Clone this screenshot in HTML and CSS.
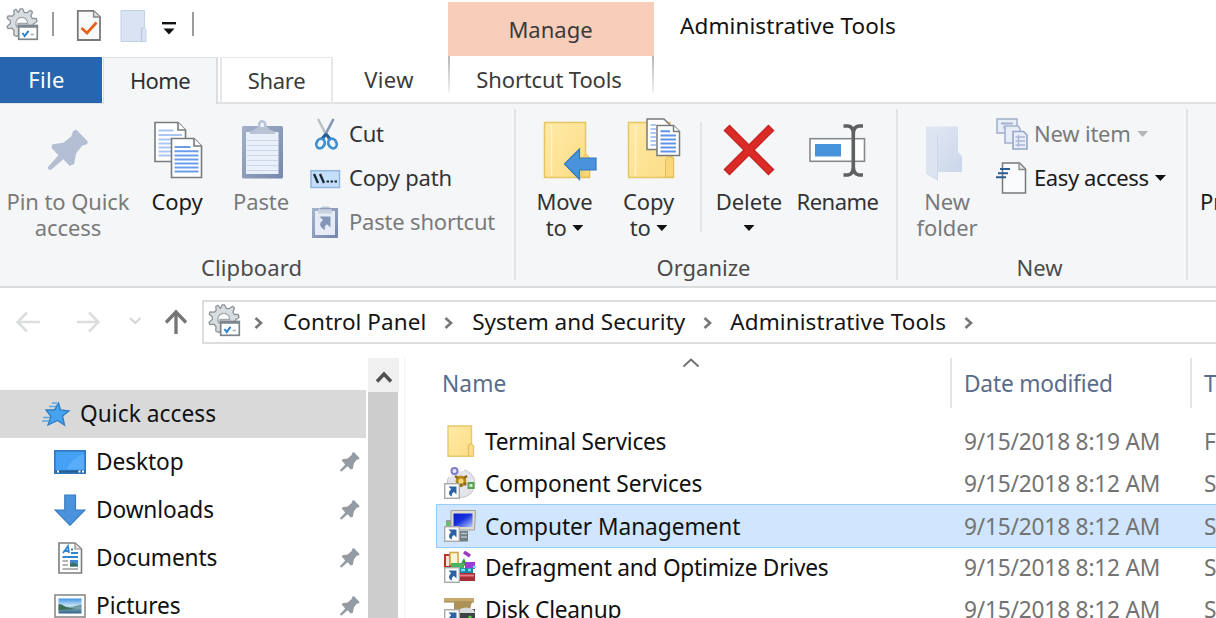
FILE: index.html
```
<!DOCTYPE html>
<html lang="en">
<head>
<meta charset="utf-8">
<title>Administrative Tools</title>
<link rel="stylesheet" href="styles.css">
</head>
<body>
<svg class="defs" width="0" height="0">
  <defs>
    <linearGradient id="folder" x1="0" y1="0" x2="1" y2="1"><stop offset="0" stop-color="#ffeaa6"/><stop offset="1" stop-color="#fbdc86"/></linearGradient>
    <linearGradient id="pale" x1="0" y1="0" x2="1" y2="1"><stop offset="0" stop-color="#e3e9f3"/><stop offset="1" stop-color="#c9d6e9"/></linearGradient>
    <linearGradient id="clip" x1="0" y1="0" x2="1" y2="1"><stop offset="0" stop-color="#a3b0c9"/><stop offset="1" stop-color="#7688ab"/></linearGradient>
    <linearGradient id="screen" x1="0" y1="0" x2="1" y2="1"><stop offset="0" stop-color="#0a1cc8"/><stop offset=".45" stop-color="#1730dd"/><stop offset="1" stop-color="#b9ccff"/></linearGradient>
    <linearGradient id="sky" x1="0" y1="0" x2="0" y2="1"><stop offset="0" stop-color="#3f92e6"/><stop offset=".5" stop-color="#cfe9f7"/><stop offset=".6" stop-color="#7fa8b5"/><stop offset="1" stop-color="#2f6488"/></linearGradient>
    <symbol id="pin" viewBox="0 0 42 42"><path d="M28 0.5Q29 0 30 1L40.500 12Q41 14 40 15L35 16.500L29 24L27 35L22.500 37L16 30L4 40.500Q1 42 0 38.500L11 26L4 18.500L5 15L16 13.500L24 7L26 1.500Z"/></symbol>
    <symbol id="admin" viewBox="0 0 33 33">
      <path fill="#d8dde1" stroke="#8d9397" stroke-width="1.300" stroke-linejoin="round" d="M12.500 4.500L9.800 1.200L7.800 2.500L8.200 6.300L6.300 8.200L2 8L1.200 10.200L4.300 12.700L4.300 15.500L1 18.500L2 20.700L6 20.200L8 22.500L7.800 27L10.500 28.500L14 26L28 20L27.200 16L31 13.500L30.300 10.500L26.300 10.500L24.800 8L26.500 4.300L24.500 2.300L21 4.700L18.300 4.500L16.600 .8L14.200 .8Z"/>
      <path fill="#fff" stroke="#a3a8ab" stroke-width="1.300" d="M11 19A6 6 0 1 1 21.800 15.500H12V19Z"/>
      <rect x="12.700" y="17.500" width="18.600" height="13.800" fill="#fff" stroke="#7c868c" stroke-width="1.700"/>
      <path d="M12.500 18.500H31.500" stroke="#7c868c" stroke-width="2.500"/>
      <path d="M16.500 25L18.700 28L22.500 22.800" fill="none" stroke="#2b80d8" stroke-width="2"/>
      <path d="M24.500 26.500H28" stroke="#a9b0b5" stroke-width="1.500"/>
    </symbol>
    <symbol id="link" viewBox="0 0 16 16"><rect x=".7" y=".7" width="14.600" height="14.600" fill="#fff" stroke="#a9a9a9" stroke-width="1.400"/><path fill="#2b62a5" d="M4.500 3.500H12.500V11.500L10 9C8 10 7.500 11.500 8 13.500C4.500 12.500 4 8.500 7.200 6.200Z"/></symbol>
  </defs>
</svg>

<header class="top">
  <div class="left">
    <div class="qat">
      <svg class="ic33"><use href="#admin"/></svg>
      <span class="bar b1"></span>
      <svg class="q-check" width="26" height="34" viewBox="0 0 26 34"><path d="M1.800 1.800H17.500L24 8V31H1.800Z" fill="#f8f9fa" stroke="#797979" stroke-width="1.800"/><path d="M17.500 2V8H24" fill="#d9dcdf" stroke="#888" stroke-width="1.300"/><path d="M5.500 19L11 24L20.500 13.500" fill="none" stroke="#e4641e" stroke-width="2.800"/></svg>
      <svg class="q-folder" width="27" height="34" viewBox="0 0 27 34"><path d="M1 1.500H24.500V19L26 20.500V32.500H1Z" fill="#d9e3f3" stroke="#c3d1e6"/><path d="M21.500 32V20L23.500 18.500" fill="none" stroke="#b9c9e1" stroke-width="1.300"/></svg>
      <svg class="q-drop" width="14" height="14" viewBox="0 0 14 14"><path d="M0 1.200H14" stroke="#111" stroke-width="2.400"/><path d="M1.500 6.500H12.500L7 12.500Z" fill="#111"/></svg>
      <span class="bar b2"></span>
    </div>
    <nav class="tabs">
      <span class="tab file">File</span><span class="tab home">Home</span><span class="tab share">Share</span><span class="tab view">View</span>
    </nav>
  </div>
  <div class="ctx"><div class="ctx-name">Manage</div><div class="ctx-tab"><span>Shortcut Tools</span></div></div>
  <div class="title">Administrative Tools</div>
</header>

<section class="ribbon">
  <div class="group g-clip">
    <div class="body">
      <div class="big off" style="width:136px">
        <svg width="136" height="74" viewBox="0 114 136 74"><use href="#pin" x="47.500" y="129.500" width="41.500" height="41.500" fill="#b4bfd4"/></svg>
        <span>Pin to Quick<br>access</span>
      </div>
      <div class="big strong" style="width:82px">
        <svg width="82" height="74" viewBox="136 114 82 74"><g fill="#fff" stroke="#777b7d" stroke-width="1.600"><path d="M155 122.500H178L185.500 130V161.500H155Z"/><path d="M178 122.500V130H185.500"/></g>
          <path d="M158.500 130.500H173.500M158.500 135H182M158.500 139.500H182M158.500 143.500H172M158.500 147.500H172M158.500 151.500H172M158.500 155.500H172" stroke="#a9c7f3" stroke-width="1.800"/>
          <g fill="#fff" stroke="#777b7d" stroke-width="1.600"><path d="M171.500 138.500H194L201.500 146V177.500H171.500Z"/><path d="M194 138.500V146H201.500"/></g>
          <path d="M174.500 147H190.500M174.500 151.200H198.500M174.500 155.400H198.500M174.500 159.600H198.500M174.500 163.500H198.500M174.500 167.500H198.500M174.500 171.500H198.500" stroke="#6c9dea" stroke-width="2"/></svg>
        <span>Copy</span>
      </div>
      <div class="big off" style="width:86px">
        <svg width="86" height="74" viewBox="218 114 86 74"><rect x="242" y="126" width="41" height="52.500" rx="1.500" fill="url(#clip)"/><rect x="246" y="132" width="32.500" height="42" fill="#eaf0f9"/>
          <path d="M247 140.500H278M247 145.500H278M247 150.500H278M247 155.500H278M247 160.500H278M247 165.500H278M247 170.500H278" stroke="#ccd6e8" stroke-width="1.200"/>
          <path d="M250 134V131.500Q256 130 258 126V123.500Q259 120 262 120T266.500 123.500V126Q268 130 275 131.500V134Z" fill="#b8c3d6"/><path d="M260.500 127V124.500Q260.500 122.500 262.300 122.500T264 124.500V127Z" fill="#eef1f6"/></svg>
        <span>Paste</span>
      </div>
      <div class="smalls">
        <div class="small"><svg width="39" height="44" viewBox="310 112 39 44"><path d="M318 119L329 140" stroke="#b9c1c6" stroke-width="2.600"/><path d="M333.500 119L322.500 140" stroke="#8295b2" stroke-width="2.600"/><path d="M326 134L321 140M326 134L331 140" stroke="#235f96" stroke-width="3"/><ellipse cx="320.500" cy="143.500" rx="4" ry="5" transform="rotate(25 320.500 143.500)" fill="#f4f8fc" stroke="#3e8fd0" stroke-width="2.700"/><ellipse cx="332.500" cy="143.500" rx="4" ry="5" transform="rotate(-25 332.500 143.500)" fill="#f4f8fc" stroke="#3e8fd0" stroke-width="2.700"/></svg><span>Cut</span></div>
        <div class="small"><svg width="39" height="44" viewBox="310 156 39 44"><rect x="311" y="170.700" width="28.500" height="16.800" fill="#c3dffc" stroke="#94b5de" stroke-width="1.500"/><path d="M314 174L318 183M320 174L324 183" stroke="#1c2630" stroke-width="2.300"/><path d="M326.500 181.500H329M330.500 181.500H333M334.500 181.500H337" stroke="#1c2630" stroke-width="2.200"/></svg><span>Copy path</span></div>
        <div class="small off"><svg width="39" height="44" viewBox="310 200 39 44"><rect x="313.500" y="209.500" width="23" height="27" fill="#e6ecf6" stroke="url(#clip)" stroke-width="3"/><path d="M318 213.500V210Q319 208 321 208H322V206.500H329V208H330Q332 209 332 211V213.500Z" fill="#c8d1e0"/><path d="M320 208.500H331" stroke="#8d9cb9" stroke-width="1.500"/><path d="M319.500 216.500H330.500V227.500L327 224.300Q324 226 325 230Q319 227 320.500 222.500L323 220Z" fill="#8496b6"/></svg><span>Paste shortcut</span></div>
      </div>
    </div>
    <div class="caption">Clipboard</div>
  </div>

  <div class="group g-org">
    <div class="body">
      <div class="big" style="width:83px">
        <svg width="83" height="74" viewBox="523 114 83 74"><path d="M544.500 122.500H585.500V154L589.500 158.500V177.500H544.500Z" fill="url(#folder)" stroke="#e6c662" stroke-width="1.500"/><path d="M551.500 125V176" stroke="#fff3c6" stroke-width="1.500"/><path d="M582 177V158L586 154L589.500 158V177Z" fill="#f9d677" stroke="#e6c05a"/><path d="M564.500 164L579.500 149V158H596V170H579.500V179.500Z" fill="#4a93dc" stroke="#3478bd" stroke-width="1.200"/></svg>
        <span>Move<br>to <i class="dd"></i></span>
      </div>
      <div class="big" style="width:85px">
        <svg width="85" height="74" viewBox="606 114 85 74"><path d="M628.500 122.500H670V154L673.500 158.500V177.500H628.500Z" fill="url(#folder)" stroke="#e6c662" stroke-width="1.500"/><path d="M635.500 125V176" stroke="#fff3c6" stroke-width="1.500"/><path d="M665.500 177V159L669.500 156L673.500 159V177Z" fill="#f9d677" stroke="#e6c05a"/>
          <g fill="#fff" stroke="#777b7d" stroke-width="1.500"><path d="M647 119H664L669.500 124.500V149.500H647Z"/></g><path d="M650.500 125H656M650.500 129H656M650.500 133H656M650.500 137H656M650.500 141H656M650.500 145H656" stroke="#94b9f0" stroke-width="1.700"/>
          <g fill="#fff" stroke="#777b7d" stroke-width="1.500"><path d="M657 125.500H673.500L679.500 131.500V155.500H657Z"/><path d="M673.500 125.500V131.500H679.500"/></g><path d="M660.500 131.300H670M660.500 135.500H676M660.500 139.500H676M660.500 143.500H676M660.500 147.500H676M660.500 151.500H676" stroke="#5f93e6" stroke-width="1.900"/></svg>
        <span>Copy<br>to <i class="dd"></i></span>
      </div>
      <div class="rule"></div>
      <div class="big" style="width:82px">
        <svg width="82" height="74" viewBox="709 114 82 74"><path d="M727.500 127.500L772.500 172.500M772.500 127.500L727.500 172.500" stroke="#bd2222" stroke-width="8.500"/><path d="M728.300 128.300L771.700 171.700M771.700 128.300L728.300 171.700" stroke="#da2b27" stroke-width="6.300"/></svg>
        <span>Delete<br><i class="dd"></i></span>
      </div>
      <div class="big rename" style="width:95px">
        <svg width="95" height="74" viewBox="791 114 95 74"><rect x="811" y="138.700" width="54.500" height="22.600" fill="#fff" stroke="#858a8d" stroke-width="1.600"/><rect x="816" y="144" width="26" height="12.500" fill="#4794dc"/><path d="M844.500 126H849Q854 126.500 854.300 133V167Q854 174.500 849 175H844.500M864 126H860Q854.800 126.500 854.300 133M864 175H860Q854.800 174.500 854.300 167" fill="none" stroke="#5e6163" stroke-width="3.600"/></svg>
        <span>Rename</span>
      </div>
    </div>
    <div class="caption">Organize</div>
  </div>

  <div class="group g-new">
    <div class="body">
      <div class="big off" style="width:78px">
        <svg width="78" height="74" viewBox="908 114 78 74"><path d="M926 126.500H958V152L962 156V172H936Z" fill="url(#pale)"/><path d="M926 126.500L937.500 134V180L926 173Z" fill="#dce4f1"/><path d="M937.500 134V180M926 173L937.500 180" stroke="#cdd8e8" fill="none"/></svg>
        <span>New<br>folder</span>
      </div>
      <div class="smalls">
        <div class="small off"><svg width="38" height="44" viewBox="996 112 38 44"><g fill="#e8eef8" stroke="#a4b2cc" stroke-width="1.600"><rect x="997" y="119" width="20" height="14"/><path d="M1001 123.500H1013M1003 127.500H1010" stroke-width="2"/><path d="M1005 126H1018L1020 128.500V143H1005Z"/><path d="M1013 131.500H1023.500L1027 135V149H1013Z" stroke="#94a6c7"/></g><path d="M1015.500 137H1025M1015.500 141H1025M1015.500 145H1025M1018.500 135V147" stroke="#a9b7d2" stroke-width="1.300"/></svg><span>New item <i class="dd"></i></span></div>
        <div class="small strong easy"><svg width="38" height="44" viewBox="996 156 38 44"><path d="M1002.500 163H1019.500L1025.500 169V193H1002.500Z" fill="#fafbfc" stroke="#797979" stroke-width="1.500"/><path d="M1019 163.500V169.500H1025" fill="#e2e4e6" stroke="#8a8a8a" stroke-width="1.300"/><path d="M1000 169H1010M998 173.200H1008M996 177.300H1006" stroke="#2a5c96" stroke-width="1.900"/></svg><span>Easy access <i class="dd"></i></span></div>
      </div>
    </div>
    <div class="caption">New</div>
  </div>
  <div class="group g-open">
    <div class="body"><div class="big strong"><svg width="100" height="74"></svg><span>Properties</span></div></div>
  </div>
</section>

<section class="navbar">
  <svg width="202" height="56" viewBox="0 288 202 56" fill="none"><path d="M40 322H18M27 312.500L17.500 322L27 331.500" stroke="#dcdddd" stroke-width="2.500"/><path d="M77 322H98M89 312.500L98.500 322L89 331.500" stroke="#dcdddd" stroke-width="2.500"/><path d="M130 318L135.300 323L140.500 318" stroke="#d5d5d5" stroke-width="2"/><path d="M176 334V313M166 322.500L176 312L186 322.500" stroke="#757575" stroke-width="3.300"/></svg>
  <div class="address">
    <svg class="ic33"><use href="#admin"/></svg>
    <svg class="sep s1" viewBox="0 0 9 12"><path d="M1.500 1L7 6L1.500 11"/></svg><span>Control Panel</span>
    <svg class="sep s2" viewBox="0 0 9 12"><path d="M1.500 1L7 6L1.500 11"/></svg><span class="sys">System and Security</span>
    <svg class="sep s3" viewBox="0 0 9 12"><path d="M1.500 1L7 6L1.500 11"/></svg><span class="adm">Administrative Tools</span>
    <svg class="sep s4" viewBox="0 0 9 12"><path d="M1.500 1L7 6L1.500 11"/></svg>
  </div>
</section>

<main class="main">
  <aside class="tree">
    <div class="node root"><svg width="32" height="32" viewBox="0 0 32 32"><path d="M18.500 5L20.500 12L29 13L22.500 18L24.500 27L17.500 22.500L8 27L11 18.500L6 12H14.500Z" fill="#45a3ef" stroke="#2d7cc4" stroke-width="1.300"/><path d="M12 5H17M9 8.500H16M3 19.500H10M2 23H9" stroke="#5ca7e3" stroke-width="1.300"/></svg><span>Quick access</span></div>
    <div class="node"><svg width="32" height="32" viewBox="0 0 32 32"><rect x=".8" y="4.800" width="30.400" height="22.400" fill="#45a1f5" stroke="#2a72b8" stroke-width="1.500"/><path d="M13 23Q17 12 30 8V23Z" fill="#58acf8"/><path d="M1.500 25.500H30.500" stroke="#225d97" stroke-width="2.400"/><path d="M3 25.500H5M24.500 25.500H26.500M28 25.500H30" stroke="#fff" stroke-width="1.800"/></svg><span>Desktop</span><svg class="pin"><use href="#pin"/></svg></div>
    <div class="node"><svg width="32" height="32" viewBox="0 0 32 32"><path d="M10.800 1H21.500V16H31L16 31.300L1 16H10.800Z" fill="#4b92dd" stroke="#397bc0" stroke-width="1.200"/></svg><span>Downloads</span><svg class="pin"><use href="#pin"/></svg></div>
    <div class="node"><svg width="32" height="32" viewBox="0 0 32 32"><path d="M5 1H21L27.500 7V31H5Z" fill="#fff" stroke="#7d7d7d" stroke-width="1.600"/><path d="M21 1.500V7H27" fill="#e5e5e5" stroke="#888" stroke-width="1.200"/><path d="M9 11L14 4L15 11M10.500 9H15" fill="none" stroke="#2f86d0" stroke-width="1.800"/><path d="M17 7.500H19M17 11H24M8.500 15H24" stroke="#2f86d0" stroke-width="2"/><path d="M8.500 19H14M8.500 23H14M8.500 27H24" stroke="#9a9a9a" stroke-width="1.500"/><rect x="16" y="18" width="8" height="6.500" fill="#3e88cf"/><path d="M16 24.500V22L19 20.500L24 23V24.500Z" fill="#38705e"/></svg><span>Documents</span><svg class="pin"><use href="#pin"/></svg></div>
    <div class="node"><svg width="32" height="32" viewBox="0 0 32 32"><rect x="1" y="5" width="30" height="22" fill="#fff" stroke="#8b8b8b" stroke-width="1.600"/><rect x="4.500" y="8.500" width="23" height="15" fill="url(#sky)"/><path d="M4.500 14Q8 14 12 17L21 19L4.500 20Z" fill="#3b6e55"/><path d="M19 16.500L27.500 14.500V17.500L20 17.500Z" fill="#6c9a9b"/></svg><span>Pictures</span><svg class="pin"><use href="#pin"/></svg></div>
  </aside>
  <div class="scroll"><div class="up"><svg width="16" height="12" viewBox="0 0 16 12"><path d="M1 10.500L8 3L15 10.500" fill="none" stroke="#505050" stroke-width="3.400"/></svg></div><div class="thumb"></div></div>
  <section class="list">
    <div class="cols"><span class="c-name">Name<svg width="18" height="10" viewBox="0 0 18 10"><path d="M1.500 8.500L9 1.500L16.500 8.500" fill="none" stroke="#6e6e6e" stroke-width="1.800"/></svg></span><span class="c-date">Date modified</span><span class="c-type">Type</span></div>
    <div class="row"><svg width="32" height="32" viewBox="0 0 32 32"><path d="M4 1H27.500V19L29.500 21V31.200H4Z" fill="url(#folder)" stroke="#e8c867" stroke-width="1.400"/><path d="M24.500 31V20.500L27 18.500" fill="none" stroke="#e4c059" stroke-width="1.300"/></svg><span class="name tight">Terminal Services</span><span class="date">9/15/2018 8:19 AM</span><span class="type">File folder</span></div>
    <div class="row"><svg width="32" height="32" viewBox="0 0 32 32"><circle cx="17" cy="16.500" r="14" fill="#e3e5ea" stroke="#c3c6cd"/><path d="M5 10Q10 2 20 3" stroke="#fff" stroke-width="2" fill="none"/><circle cx="10.500" cy="4" r="3" fill="#e9eaff" stroke="#7e7cc4" stroke-width="2"/><circle cx="17" cy="14" r="4" fill="#f3d678" stroke="#b58a16" stroke-width="2.800"/><path d="M11 9L14 11M23 9L20 11M11 18L14 16.500M17 20V17M22 18L20 16" stroke="#8a6a13" stroke-width="2.600"/><rect x="24.500" y="16" width="5" height="5" fill="#d8edd3" stroke="#58a351" stroke-width="2"/><use href="#link" x="0" y="16" width="16" height="16"/></svg><span class="name">Component Services</span><span class="date">9/15/2018 8:12 AM</span><span class="type">Shortcut</span></div>
    <div class="row sel"><svg width="32" height="32" viewBox="0 0 32 32"><path d="M2 10H8V20H2Z" fill="#929ca0"/><circle cx="4" cy="14" r="1.800" fill="#54cf45"/><path d="M7 .5H31.500L30.500 20H7Z" fill="#dedbd3" stroke="#a19f98"/><path d="M9.500 3.500H28.500V17H9.500Z" fill="url(#screen)"/><path d="M16 21H24V31.500H16Z" fill="#717e84"/><path d="M17 23.500H23M17 27H23" stroke="#b8c4ca" stroke-width="1.400"/><use href="#link" x="0" y="16" width="16" height="16"/></svg><span class="name">Computer Management</span><span class="date">9/15/2018 8:12 AM</span><span class="type">Shortcut</span></div>
    <div class="row"><svg width="32" height="32" viewBox="0 0 32 32"><path d="M1 4H6V16H1Z" fill="#f8e4df" stroke="#bc3028" stroke-width="2"/><rect x="6" y="1.500" width="8" height="12" fill="#fff7cf" stroke="#cfa94a" stroke-width="1.600"/><path d="M20 1L26 5" stroke="#9b3bc4" stroke-width="3.500"/><path d="M15 16L20 7L23 14Z" fill="#3c9a50"/><path d="M7 12H20V17H7Z" fill="#4ab45e"/><rect x="21" y="11" width="10" height="7" fill="#9a3dd3"/><path d="M15 17H29V22H15Z" fill="#1e86a5"/><path d="M17 19H21M24 19H27M29 16H32" stroke="#6ee1ff" stroke-width="2.500"/><path d="M15 22H31V30H15Z" fill="#a82b38"/><path d="M16 24.500H30" stroke="#e77b80" stroke-width="2"/><use href="#link" x="0" y="16" width="16" height="16"/></svg><span class="name tight">Defragment and Optimize Drives</span><span class="date">9/15/2018 8:12 AM</span><span class="type">Shortcut</span></div>
    <div class="row"><svg width="32" height="32" viewBox="0 0 32 32"><path d="M0 5H30V9H0Z" fill="#c6a96d"/><path d="M0 9H30" stroke="#9d8148"/><path d="M10 9H28L26 16H10Z" fill="#ac9258"/><path d="M16 16H31V32H14Z" fill="#3e4345"/><path d="M14 17Q22 12 30 17L31 20H14Z" fill="#dadddd"/><circle cx="26" cy="24" r="1.600" fill="#45dd37"/><use href="#link" x="0" y="16" width="16" height="16"/></svg><span class="name tight">Disk Cleanup</span><span class="date">9/15/2018 8:12 AM</span><span class="type">Shortcut</span></div>
  </section>
</main>
</body>
</html>
```
FILE: styles.css
```
* { box-sizing: border-box; }
body {
  margin: 0;
  width: 1216px;
  height: 618px;
  overflow: hidden;
  background: #fff;
  color: #111;
  font: 22px/26px "Noto Sans", "Open Sans", sans-serif;
}
svg { display: block; flex: none; }
.defs { position: absolute; }
.ic33 { width: 33px; height: 33px; }

/* title bar and tabs */
.top { display: flex; height: 104px; border-bottom: 2px solid #e0e2e4; }
.left { width: 448px; }
.qat { display: flex; align-items: flex-start; height: 57px; padding: 8px 0 0 6px; }
.bar { width: 2px; height: 24px; margin-top: 4px; background: #9b9b9b; }
.b1 { margin-left: 13px; }
.q-check { margin: 1px 0 0 22px; }
.q-folder { margin: 1px 0 0 18px; }
.q-drop { margin: 14px 0 0 15px; }
.b2 { margin-left: 16px; }
.tabs { display: flex; height: 47px; color: #3b3b3b; }
.tab { height: 46px; line-height: 45px; text-align: center; }
.file { width: 102px; padding-right: 9px; background: #2765af; color: #fff; letter-spacing: .3px; }
.home { width: 115px; height: 47px; margin-left: 1px; background: #f5f6f8; border: 2px solid #dcddde; border-width: 1px 2px 0 1px; letter-spacing: -.6px; line-height: 44px; color: #2f2f2f; }
.share { width: 113px; margin-left: 2px; border: 1px solid #e6e8ea; border-width: 1px 2px 0; letter-spacing: -.3px; line-height: 44px; }
.view { width: 112px; letter-spacing: .4px; }
.ctx { width: 206px; padding-top: 2px; text-align: center; color: #3b3b3b; }
.ctx-name { height: 54px; line-height: 55px; padding-right: 1px; background: #f8cdb9; }
.ctx-tab { height: 37px; line-height: 46px; border: 2px solid; border-width: 0 2px; border-image: linear-gradient(#b5b5b5, #f4f4f4) 1; letter-spacing: -.15px; padding-right: 4px; }
.title { padding: 13px 0 0 26px; font-size: 22.500px; letter-spacing: .1px; line-height: 25px; color: #111; }

/* ribbon */
.ribbon { display: flex; height: 184px; background: #f5f6f8; border-bottom: 2px solid #dadcde; color: #333; }
.group { position: relative; flex: none; padding-top: 10px; }
.group::after { content: ""; position: absolute; right: 0; top: 5px; width: 2px; height: 171px; background: #e1e3e5; }
.g-clip { width: 516px; }
.g-org { width: 382px; padding-left: 7px; }
.g-new { width: 290px; padding-left: 10px; }
.g-open { width: 28px; overflow: hidden; padding-left: 12px; }
.g-open::after { display: none; }
.body { display: flex; height: 140px; }
.big { text-align: center; white-space: nowrap; }
.big > span { display: block; letter-spacing: -.1px; }
.rename > span { letter-spacing: -.5px; }
.strong { color: #1b1b1b; }
.off { color: #7a7a7a; }
.g-open .big { text-align: left; }
.smalls { margin-top: -2px; }
.g-clip .smalls { padding-left: 6px; }
.g-new .smalls { padding-left: 10px; }
.small { display: flex; height: 44px; align-items: center; white-space: nowrap; letter-spacing: -.2px; }
.small span { margin-top: -2px; }
.easy { letter-spacing: -.4px; }
.rule { width: 2px; height: 110px; margin: 8px 6px 0 9px; background: #e3e5e7; }
.dd { display: inline-block; width: 11px; height: 6px; background: #111; clip-path: polygon(0 0, 100% 0, 50% 100%); vertical-align: 5px; }
.small .dd { margin-left: 1px; }
.off .dd { background: #b4b6b8; }
.caption { height: 26px; text-align: center; color: #4b4b4b; }
.g-clip .caption { padding-right: 13px; letter-spacing: .1px; }
.g-org .caption { padding-right: 14px; }
.g-new .caption { padding-right: 17px; }

/* address bar */
.navbar { display: flex; height: 70px; }
.address { display: flex; align-items: center; flex: 1; height: 44px; margin-top: 12px; border: 2px solid #dcdddd; border-right: 0; padding-left: 4px; font-size: 22.500px; white-space: nowrap; color: #151515; letter-spacing: .05px; }
.address .ic33 { margin-top: -4px; }
.sys { letter-spacing: 0; }
.adm { letter-spacing: .1px; }
.sep { width: 9px; height: 12px; margin-top: 2px; fill: none; stroke: #777; stroke-width: 2.600px; }
.s1 { margin-left: 13px; margin-right: 20px; }
.s2 { margin-left: 18px; margin-right: 19px; }
.s3, .s4 { margin-left: 18px; margin-right: 18px; }

/* folder tree */
.main { display: flex; height: 260px; font-size: 22.700px; overflow: hidden; }
.tree { width: 366px; padding-top: 32px; flex: none; }
.node { display: flex; align-items: center; height: 48px; padding: 0 6px 0 54px; }
.node > span { margin-left: 10px; flex: 1; letter-spacing: -.1px; }
.root { padding-left: 40px; background: #d9d9d9; }
.root > span { margin-left: 8px; letter-spacing: .05px; }
.pin { width: 20px; height: 20px; fill: #959ba3; }
.scroll { width: 38px; flex: none; margin-left: 2px; border-right: 2px solid #f7f7f7; }
.up { display: flex; align-items: center; justify-content: center; width: 31px; height: 34px; padding-top: 3px; background: #f0f0f0; }
.thumb { width: 30px; height: 226px; background: #cdcdcd; }

/* file list */
.list { margin-left: 30px; width: 780px; flex: none; white-space: nowrap; overflow: hidden; }
.cols { display: flex; height: 50px; line-height: 52px; margin-bottom: 12px; color: #596c8a; }
.cols span { flex: none; }
.c-name { width: 516px; padding-left: 6px; display: flex; border-right: 2px solid #e6e6e6; letter-spacing: .1px; }
.c-name svg { margin-left: 176px; }
.c-date { width: 240px; padding-left: 12px; border-right: 2px solid #e6e6e6; letter-spacing: -.2px; }
.c-type { padding-left: 12px; }
.row { display: flex; align-items: center; height: 42px; padding-left: 8px; }
.row span { flex: none; padding-top: 2px; }
.name { margin-left: 9px; width: 479px; letter-spacing: -.06px; }
.tight { letter-spacing: -.24px; }
.date, .type { color: #737373; letter-spacing: -.2px; }
.date { width: 240px; }
.sel { height: 44px; margin: 0 0 -2px; padding-left: 7px; background: #cfe6fe; border: 1px solid #99cdfb; border-width: 1px 0 1px 1px; }
.sel span { padding-top: 1px; }
```
